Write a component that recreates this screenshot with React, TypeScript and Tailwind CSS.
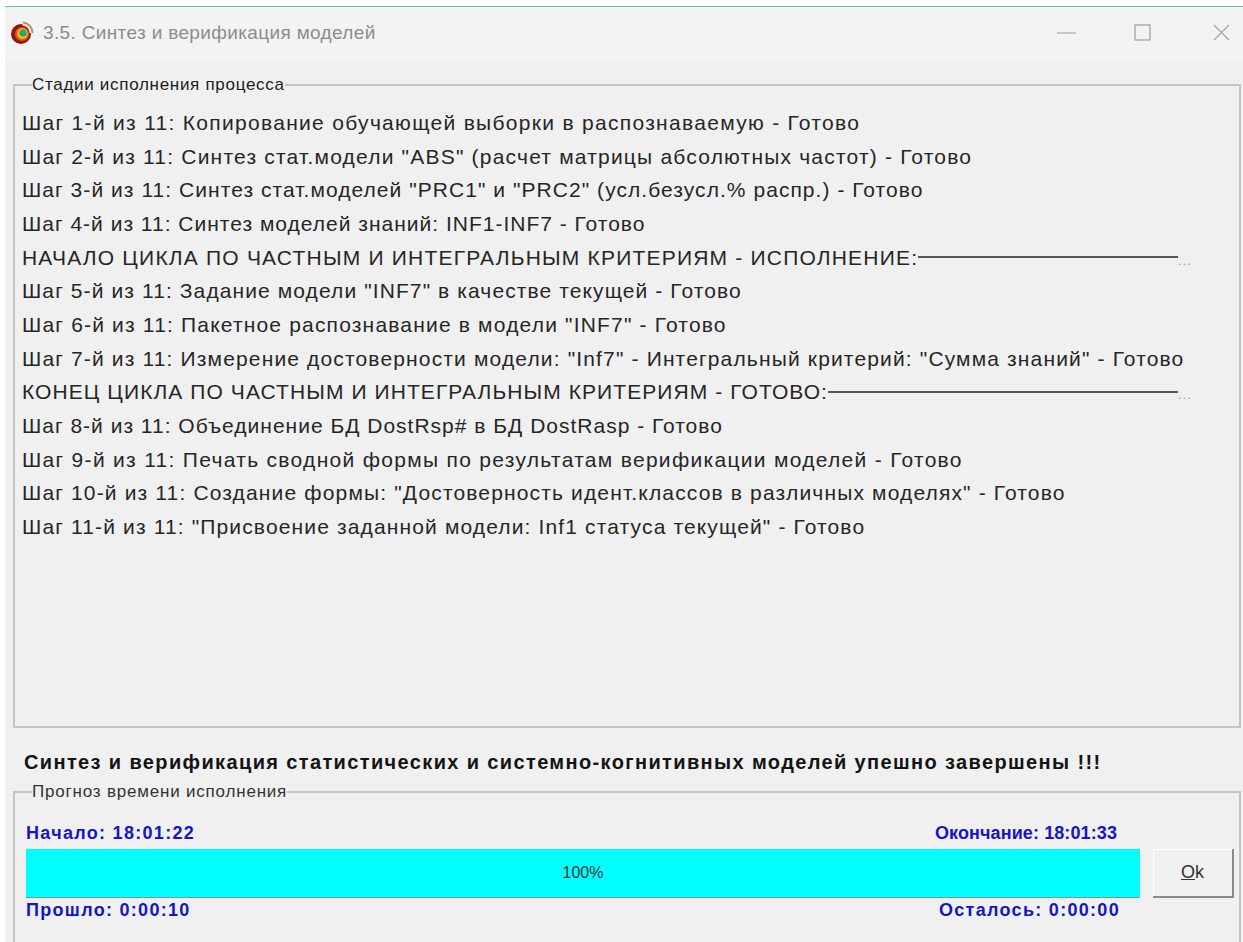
const steps = [
  { text: 'Шаг 1-й из 11: Копирование обучающей выборки в распознаваемую - Готово', tracking: 'tracking-[1.3px]' },
  { text: 'Шаг 2-й из 11: Синтез стат.модели "ABS" (расчет матрицы абсолютных частот) - Готово', tracking: 'tracking-[1.2px]' },
  { text: 'Шаг 3-й из 11: Синтез стат.моделей "PRC1" и "PRC2" (усл.безусл.% распр.) - Готово', tracking: 'tracking-[1.05px]' },
  { text: 'Шаг 4-й из 11: Синтез моделей знаний: INF1-INF7 - Готово', tracking: 'tracking-[1px]' },
  { text: 'НАЧАЛО ЦИКЛА ПО ЧАСТНЫМ И ИНТЕГРАЛЬНЫМ КРИТЕРИЯМ - ИСПОЛНЕНИЕ:', tracking: 'tracking-[1.2px]', rule: true },
  { text: 'Шаг 5-й из 11: Задание модели "INF7" в качестве текущей - Готово', tracking: 'tracking-[1.1px]' },
  { text: 'Шаг 6-й из 11: Пакетное распознавание в модели "INF7" - Готово', tracking: 'tracking-[1.18px]' },
  { text: 'Шаг 7-й из 11: Измерение достоверности модели: "Inf7" - Интегральный критерий: "Сумма знаний" - Готово', tracking: 'tracking-[1.15px]' },
  { text: 'КОНЕЦ ЦИКЛА ПО ЧАСТНЫМ И ИНТЕГРАЛЬНЫМ КРИТЕРИЯМ - ГОТОВО:', tracking: 'tracking-[1.08px]', rule: true },
  { text: 'Шаг 8-й из 11: Объединение БД DostRsp# в БД DostRasp - Готово', tracking: 'tracking-[1px]' },
  { text: 'Шаг 9-й из 11: Печать сводной формы по результатам верификации моделей - Готово', tracking: 'tracking-[1.3px]' },
  { text: 'Шаг 10-й из 11: Создание формы: "Достоверность идент.классов в различных моделях" - Готово', tracking: 'tracking-[1.15px]' },
  { text: 'Шаг 11-й из 11: "Присвоение заданной модели: Inf1 статуса текущей" - Готово', tracking: 'tracking-[1.14px]' },
];

function AppIcon() {
  return (
    <svg width="24" height="24" viewBox="0 0 24 24" className="shrink-0">
      {/* red body with a ring segment curling round the upper right */}
      <circle cx="11" cy="13" r="10" fill="#8c1a10" />
      <path d="M13 1.5a10.5 10.5 0 0 1 9.5 10.5" fill="none" stroke="#b98a5a" strokeWidth="2" />
      <path d="M12.5 3.5a8.5 8.5 0 0 1 8 8.5" fill="none" stroke="#fbeee6" strokeWidth="2" />
      <circle cx="12" cy="13" r="7" fill="#e8541a" />
      <circle cx="12.5" cy="12.5" r="5.2" fill="#f2c21a" />
      <circle cx="13" cy="12" r="3.6" fill="#22a84a" />
      <circle cx="13.5" cy="11.5" r="2" fill="#12a4d8" />
    </svg>
  );
}

export default function App() {
  return (
    <div className="h-[942px] w-[1243px] overflow-hidden bg-white font-['Liberation_Sans',sans-serif]">
      <div className="ml-[5px] mt-[6px] flex h-[936px] flex-col border-t border-t-[#6fb8a4] bg-[#f0f0f0]">
        {/* title bar */}
        <div className="flex h-[53px] shrink-0 items-start bg-[#f3f3f3] pl-[5px] pt-[14px]">
          <AppIcon />
          <span className="ml-[9px] text-[19px] leading-[24px] tracking-[0.35px] text-[#8c8c8c]">3.5. Синтез и верификация моделей</span>
          <div className="ml-auto flex h-[24px] items-center pr-[12px]">
            <svg width="20" height="18" viewBox="0 0 20 18"><path d="M0 9h19" stroke="#a8a8a8" strokeWidth="1.2" /></svg>
            <svg width="18" height="18" viewBox="0 0 18 18" className="ml-[57px]"><rect x="1" y="1" width="15" height="15" fill="none" stroke="#a8a8a8" strokeWidth="1.4" /></svg>
            <svg width="18" height="18" viewBox="0 0 18 18" className="ml-[61px]"><path d="M1 1l15 15M16 1L1 16" stroke="#a8a8a8" strokeWidth="1.3" /></svg>
          </div>
        </div>

        <div className="flex flex-1 flex-col pl-[8px] pr-[2px]">
          {/* stages */}
          <fieldset className="mt-[15px] h-[653px] shrink-0 border-2 border-[#c4c4c4] pl-[7px] pr-[4px]">
            <legend className="ml-[10px] text-[17px] leading-[20px] tracking-[0.7px] text-[#1c1c1c]">Стадии исполнения процесса</legend>
            <div className="mt-[11px] flex flex-col">
              {steps.map((step) => (
                <div key={step.text} className={`flex h-[33.67px] items-center whitespace-nowrap text-[21px] text-[#262626] ${step.tracking}`}>
                  <span>{step.text}</span>
                  {step.rule && (
                    <>
                      <div className="h-[2px] flex-1 bg-[#555555]" />
                      <span className="mr-[34px] mt-[6px] w-[23px] shrink-0 text-[13px] tracking-[1px] text-[#999999]">...</span>
                    </>
                  )}
                </div>
              ))}
            </div>
          </fieldset>

          <div className="mt-[22px] pl-[11px] text-[20px] font-bold leading-[24px] tracking-[1.37px] text-[#141414]">
            Синтез и верификация статистических и системно-когнитивных моделей упешно завершены !!!
          </div>

          {/* time forecast */}
          <fieldset className="mt-[8px] flex-1 border-2 border-b-0 border-[#c4c4c4] pl-[11px] pr-[5px]">
            <legend className="ml-[6px] text-[17px] leading-[20px] tracking-[0.8px] text-[#333333]">Прогноз времени исполнения</legend>
            <div className="mt-[20px] flex justify-between pr-[117px] text-[18px] font-bold leading-[22px] tracking-[1.3px] text-[#1414c8]">
              <span>Начало: 18:01:22</span>
              <span className="tracking-[0.1px]">Окончание: 18:01:33</span>
            </div>
            <div className="mt-[5px] flex items-stretch gap-[13px]">
              <div className="flex h-[49px] flex-1 items-center justify-center border-b border-b-[#7a9a9a] bg-[#00ffff] text-[16px] text-[#333333]">
                100%
              </div>
              <button className="h-[49px] w-[81px] shrink-0 border-r-2 border-b-2 border-r-[#8a8a8a] border-b-[#8a8a8a] bg-[#f0f0f0] text-[18px] text-[#333333] shadow-[inset_1px_1px_0_#ffffff]">
                <span className="underline">O</span>k
              </button>
            </div>
            <div className="mt-[1px] flex justify-between pr-[114px] text-[18px] font-bold leading-[22px] tracking-[1.3px] text-[#1414c8]">
              <span>Прошло: 0:00:10</span>
              <span>Осталось: 0:00:00</span>
            </div>
          </fieldset>
        </div>
      </div>
    </div>
  );
}
